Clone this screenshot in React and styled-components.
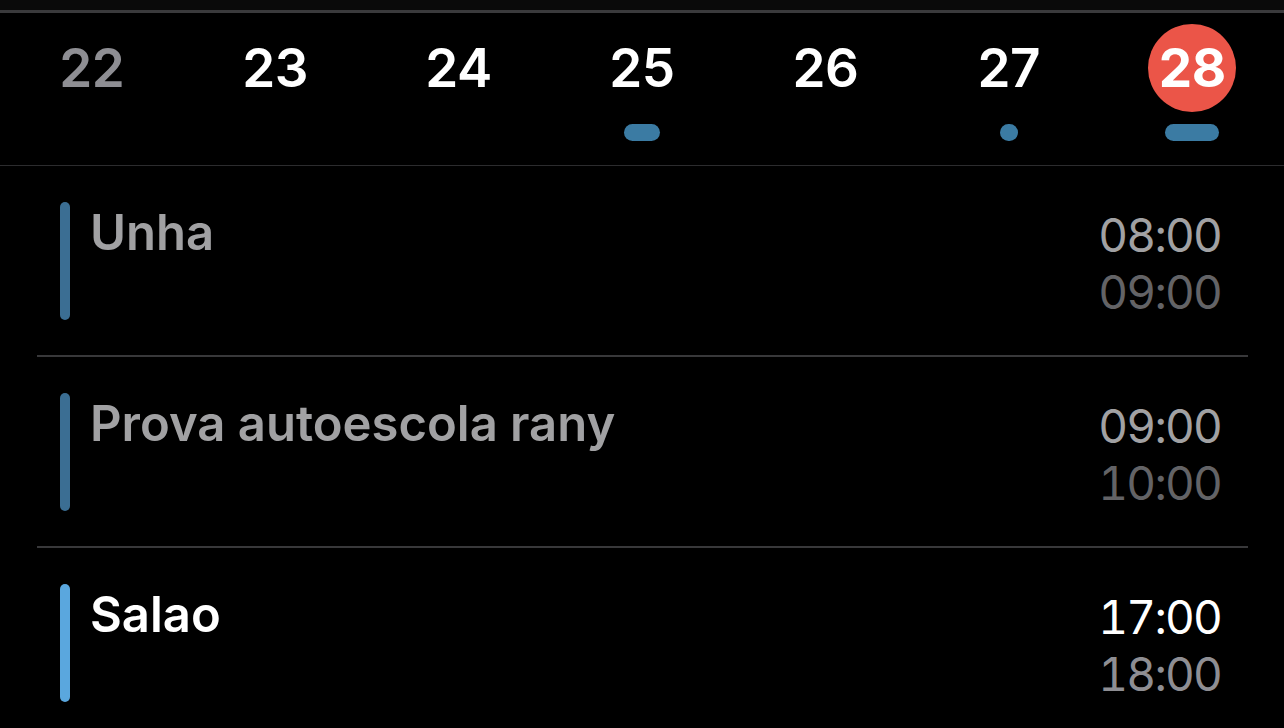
import React from 'react';
import styled, { createGlobalStyle } from 'styled-components';

const GlobalStyle = createGlobalStyle`
  html, body {
    margin: 0;
    padding: 0;
    background: #000;
  }
  body {
    font-family: Inter, "Noto Sans", "Liberation Sans", sans-serif;
    -webkit-font-smoothing: antialiased;
  }
`;

const Screen = styled.div`
  width: 1284px;
  height: 728px;
  overflow: hidden;
  background: #000;
`;

const StatusGap = styled.div`
  height: 10px;
  background: #0a0a0a;
  border-bottom: 3px solid #3a3a3c;
`;

const WeekBar = styled.div`
  display: grid;
  grid-template-columns: repeat(7, 1fr);
  height: 152px;
  border-bottom: 1px solid #2c2c2e;
`;

const DayCell = styled.div`
  display: flex;
  flex-direction: column;
  align-items: center;
  padding-top: 11px;
`;

const DayNumber = styled.div`
  width: 88px;
  height: 88px;
  border-radius: 50%;
  display: flex;
  align-items: center;
  justify-content: center;
  font-size: 53px;
  font-weight: ${p => (p.$today ? 700 : 600)};
  letter-spacing: -0.5px;
  color: ${p => (p.$past ? '#8e8e93' : '#fff')};
  background: ${p => (p.$today ? '#eb5548' : 'transparent')};
`;

const Marker = styled.div`
  margin-top: 12px;
  height: 17px;
  width: ${p => p.$width}px;
  border-radius: 9px;
  background: ${p => (p.$width ? '#3b7ba3' : 'transparent')};
`;

const EventList = styled.div`
  display: flex;
  flex-direction: column;
`;

const EventRow = styled.div`
  display: flex;
  align-items: flex-start;
  margin: 0 36px 0 37px;
  padding: 36px 27px 34px 23px;
  border-bottom: 2px solid #38383a;
`;

const ColorBar = styled.div`
  flex: none;
  width: 10px;
  height: 118px;
  border-radius: 5px;
  background: ${p => p.$color};
`;

const Title = styled.div`
  flex: 1;
  margin: 2px 0 0 20px;
  font-size: 49px;
  font-weight: 600;
  line-height: 1.2;
  color: ${p => (p.$active ? '#fff' : '#a1a1a3')};
`;

const Times = styled.div`
  display: flex;
  flex-direction: column;
  align-items: flex-end;
  margin-top: 5px;
  font-size: 46px;
  font-weight: 400;
  line-height: 57px;
  letter-spacing: -1.8px;
  font-variant-numeric: tabular-nums;
`;

const Time = styled.span`
  color: ${p => p.$color};
`;

const days = [
  { n: 22, past: true, marker: 0 },
  { n: 23, marker: 0 },
  { n: 24, marker: 0 },
  { n: 25, marker: 36 },
  { n: 26, marker: 0 },
  { n: 27, marker: 18 },
  { n: 28, today: true, marker: 54 },
];

const events = [
  { title: 'Unha', start: '08:00', end: '09:00', bar: '#3b6e93' },
  { title: 'Prova autoescola rany', start: '09:00', end: '10:00', bar: '#3b6e93' },
  { title: 'Salao', start: '17:00', end: '18:00', bar: '#5aa7de', active: true },
];

const App = () => {
  return (
    <Screen>
      <GlobalStyle />
      <StatusGap />
      <WeekBar>
        {days.map(d => (
          <DayCell key={d.n}>
            <DayNumber $past={d.past} $today={d.today}>{d.n}</DayNumber>
            <Marker $width={d.marker} />
          </DayCell>
        ))}
      </WeekBar>
      <EventList>
        {events.map(e => (
          <EventRow key={e.title}>
            <ColorBar $color={e.bar} />
            <Title $active={e.active}>{e.title}</Title>
            <Times>
              <Time $color={e.active ? '#fff' : '#a1a1a3'}>{e.start}</Time>
              <Time $color={e.active ? '#8e8e93' : '#636366'}>{e.end}</Time>
            </Times>
          </EventRow>
        ))}
      </EventList>
    </Screen>
  );
};

export default App;
